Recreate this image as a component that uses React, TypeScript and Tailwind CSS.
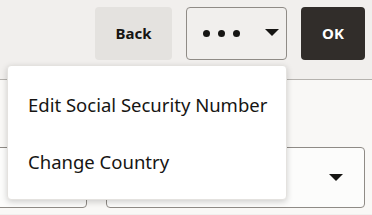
const font = { fontFamily: '"Noto Sans", "Open Sans", sans-serif' };

function Caret() {
  return (
    <svg width="14" height="7" viewBox="0 0 14 7" className="block">
      <path d="M0 0h14L7 7z" fill="#161513" />
    </svg>
  );
}

export default function App() {
  return (
    <div className="relative w-[372px] h-[215px] overflow-hidden bg-[#f1f0ee] text-[#161513]" style={font}>
      {/* Toolbar */}
      <div className="h-[80px] bg-[#f1efed] border-b border-[#b5b2ae] flex items-start justify-end gap-[14px] pt-[7px] pr-[7px]">
        <button className="w-[77px] h-[53px] rounded-[4px] bg-[#e4e2df] text-[15px] font-bold">Back</button>
        <button className="w-[101px] h-[53px] rounded-[4px] border border-[#8f8b86] bg-transparent flex items-center pl-[16px] gap-[8px]">
          <span className="w-[7px] h-[7px] rounded-full bg-[#161513]" />
          <span className="w-[7px] h-[7px] rounded-full bg-[#161513]" />
          <span className="w-[7px] h-[7px] rounded-full bg-[#161513]" />
          <span className="ml-[17px] -mt-[3px]">
            <Caret />
          </span>
        </button>
        <button className="w-[64px] h-[53px] rounded-[4px] bg-[#312d2a] text-white text-[15px] font-bold">OK</button>
      </div>

      {/* Form fields behind the menu */}
      <div className="bg-[#f9f8f6] pt-[67px] pb-[6px] flex gap-[19px]">
        <div className="-ml-[8px] w-[95px] h-[61px] rounded-[4px] border border-[#8f8b86] bg-[#fcfcfb]" />
        <div className="w-[259px] h-[61px] rounded-[4px] border border-[#8f8b86] bg-[#fcfcfb] flex items-center justify-end pr-[21px]">
          <Caret />
        </div>
      </div>

      {/* Overflow menu */}
      <div className="absolute left-[7px] top-[65px] w-[280px] h-[135px] rounded-[4px] bg-white border border-[#e4e2df] shadow-[0_2px_6px_rgba(0,0,0,0.18)] py-[10px]">
        <div className="h-[57px] flex items-center pl-[20px] text-[18.5px]">Edit Social Security Number</div>
        <div className="h-[57px] flex items-center pl-[20px] text-[18.5px]">Change Country</div>
      </div>
    </div>
  );
}
